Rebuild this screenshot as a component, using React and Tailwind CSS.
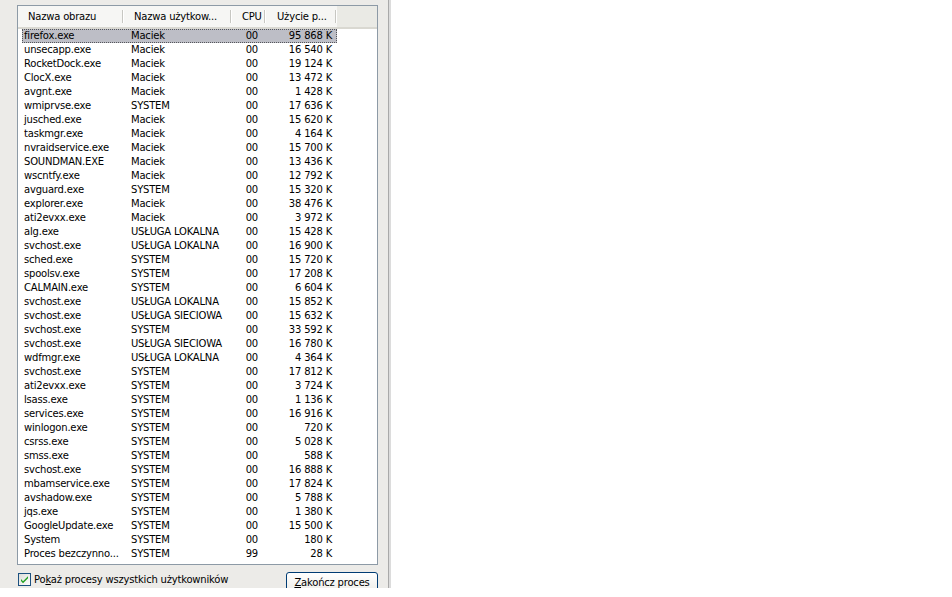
import React from "react";

const rows = [
  ["firefox.exe", "Maciek", "00", "95 868 K"],
  ["unsecapp.exe", "Maciek", "00", "16 540 K"],
  ["RocketDock.exe", "Maciek", "00", "19 124 K"],
  ["ClocX.exe", "Maciek", "00", "13 472 K"],
  ["avgnt.exe", "Maciek", "00", "1 428 K"],
  ["wmiprvse.exe", "SYSTEM", "00", "17 636 K"],
  ["jusched.exe", "Maciek", "00", "15 620 K"],
  ["taskmgr.exe", "Maciek", "00", "4 164 K"],
  ["nvraidservice.exe", "Maciek", "00", "15 700 K"],
  ["SOUNDMAN.EXE", "Maciek", "00", "13 436 K"],
  ["wscntfy.exe", "Maciek", "00", "12 792 K"],
  ["avguard.exe", "SYSTEM", "00", "15 320 K"],
  ["explorer.exe", "Maciek", "00", "38 476 K"],
  ["ati2evxx.exe", "Maciek", "00", "3 972 K"],
  ["alg.exe", "USŁUGA LOKALNA", "00", "15 428 K"],
  ["svchost.exe", "USŁUGA LOKALNA", "00", "16 900 K"],
  ["sched.exe", "SYSTEM", "00", "15 720 K"],
  ["spoolsv.exe", "SYSTEM", "00", "17 208 K"],
  ["CALMAIN.exe", "SYSTEM", "00", "6 604 K"],
  ["svchost.exe", "USŁUGA LOKALNA", "00", "15 852 K"],
  ["svchost.exe", "USŁUGA SIECIOWA", "00", "15 632 K"],
  ["svchost.exe", "SYSTEM", "00", "33 592 K"],
  ["svchost.exe", "USŁUGA SIECIOWA", "00", "16 780 K"],
  ["wdfmgr.exe", "USŁUGA LOKALNA", "00", "4 364 K"],
  ["svchost.exe", "SYSTEM", "00", "17 812 K"],
  ["ati2evxx.exe", "SYSTEM", "00", "3 724 K"],
  ["lsass.exe", "SYSTEM", "00", "1 136 K"],
  ["services.exe", "SYSTEM", "00", "16 916 K"],
  ["winlogon.exe", "SYSTEM", "00", "720 K"],
  ["csrss.exe", "SYSTEM", "00", "5 028 K"],
  ["smss.exe", "SYSTEM", "00", "588 K"],
  ["svchost.exe", "SYSTEM", "00", "16 888 K"],
  ["mbamservice.exe", "SYSTEM", "00", "17 824 K"],
  ["avshadow.exe", "SYSTEM", "00", "5 788 K"],
  ["jqs.exe", "SYSTEM", "00", "1 380 K"],
  ["GoogleUpdate.exe", "SYSTEM", "00", "15 500 K"],
  ["System", "SYSTEM", "00", "180 K"],
  ["Proces bezczynno...", "SYSTEM", "99", "28 K"],
];

// header cell with XP style separator on the right
const HeaderCell = ({ width, pl, children }) => (
  <div className={`relative flex items-center h-full ${width} ${pl}`}>
    <span className="whitespace-nowrap">{children}</span>
    <div className="absolute right-0 top-[4px] bottom-[4px] w-[2px] border-l border-[#c7c7c2] border-r border-r-white" />
  </div>
);

const CheckBox = () => (
  <svg width="13" height="13" viewBox="0 0 13 13">
    <defs>
      <linearGradient id="cb" x1="0" y1="0" x2="1" y2="1">
        <stop offset="0" stopColor="#dcdcd7" />
        <stop offset="1" stopColor="#ffffff" />
      </linearGradient>
    </defs>
    <rect x="0.5" y="0.5" width="12" height="12" fill="url(#cb)" stroke="#1c5180" />
    <path d="M3 6 L5 8.2 L10 3.2 L10 5.2 L5 10.2 L3 8 Z" fill="#21a121" />
  </svg>
);

export default function App() {
  return (
    <div
      className="w-[952px] h-[597px] bg-white text-black text-[10px] leading-[14px] tracking-[-0.2px] overflow-hidden"
      style={{ fontFamily: '"DejaVu Sans", Verdana, sans-serif' }}
    >
      <div className="flex h-[588px] w-[393px] overflow-hidden">
        <div className="w-[388px] h-full bg-[#ecebe8] pl-[17px] pt-[5px] flex flex-col">
          {/* list view */}
          <div className="w-[361px] h-[560px] shrink-0 border border-[#8d9aa6] bg-white flex flex-col">
            <div className="flex h-[23px] shrink-0 bg-[#f6f6f4] border-b-2 border-[#d9d8d1]">
              <HeaderCell width="w-[106px]" pl="pl-[10px]">Nazwa obrazu</HeaderCell>
              <HeaderCell width="w-[108px]" pl="pl-[10px]">Nazwa użytkow...</HeaderCell>
              <HeaderCell width="w-[34px]" pl="pl-[10px]">CPU</HeaderCell>
              <HeaderCell width="w-[71px]" pl="pl-[11px]">Użycie p...</HeaderCell>
              <div className="flex-1 bg-[#eaeae5]" />
            </div>
            <div className="flex flex-col">
              {rows.map((r, i) => (
                <div
                  key={i}
                  className={`flex h-[14px] ml-[4px] w-[315px] items-center ${
                    i === 0 ? "bg-[#bdbec6] outline outline-1 outline-dotted outline-[#55565c] -outline-offset-1" : ""
                  }`}
                >
                  <div className="w-[102px] pl-[2px] whitespace-nowrap">{r[0]}</div>
                  <div className="w-[108px] pl-[7px] whitespace-nowrap">{r[1]}</div>
                  <div className="w-[34px] pr-[8px] text-right">{r[2]}</div>
                  <div className="w-[71px] pr-[5px] text-right whitespace-nowrap">{r[3]}</div>
                </div>
              ))}
            </div>
          </div>

          {/* bottom row */}
          <div className="w-[361px] flex justify-between mt-[7px] shrink-0">
            <div className="flex items-center gap-[3px] mt-[1px] ml-[1px] h-[13px]">
              <CheckBox />
              <span className="whitespace-nowrap">
                Po<span className="underline">k</span>aż procesy wszystkich użytkowników
              </span>
            </div>
            <div className="w-[92px] h-[23px] rounded-[3px] border border-[#003c74] bg-gradient-to-b from-white to-[#ecebe6] flex items-start justify-center pt-[3px]">
              <span className="whitespace-nowrap">
                <span className="underline">Z</span>akończ proces
              </span>
            </div>
          </div>
        </div>
        <div className="w-px h-full bg-[#a9a9a9]" />
        <div className="w-[2px] h-full bg-[#dcdcdc]" />
      </div>
    </div>
  );
}
